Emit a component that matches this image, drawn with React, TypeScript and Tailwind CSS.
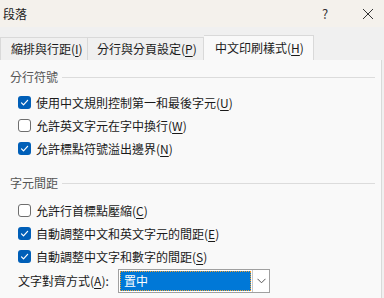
import React from 'react';

const FONT = { fontFamily: '"Noto Sans CJK TC", "Noto Sans", sans-serif' };

const Mn: React.FC<{ pre: string; key_: string }> = ({ pre, key_ }) => (
  <span>
    {pre}(<span className="underline underline-offset-2">{key_}</span>)
  </span>
);

const CheckBox: React.FC<{ checked: boolean }> = ({ checked }) =>
  checked ? (
    <span className="w-[13px] h-[13px] rounded-[3px] bg-[#005fb8] flex items-center justify-center shrink-0">
      <svg width="9" height="9" viewBox="0 0 9 9" fill="none">
        <path d="M1.5 4.8 L3.5 6.8 L7.6 2.3" stroke="white" strokeWidth="1.2" strokeLinecap="round" strokeLinejoin="round" />
      </svg>
    </span>
  ) : (
    <span className="w-[13px] h-[13px] rounded-[3px] bg-white border border-[#6e6e6e] shrink-0" />
  );

const Row: React.FC<{ checked: boolean; label: string; k: string }> = ({ checked, label, k }) => (
  <div className="h-[23px] flex items-center pl-[18px] gap-[5px] text-[12px] text-[#1a1a1a]">
    <CheckBox checked={checked} />
    <Mn pre={label} key_={k} />
  </div>
);

const Header: React.FC<{ title: string }> = ({ title }) => (
  <div className="h-[16px] flex items-center pl-[10px] pr-[6px] gap-[4px]">
    <span className="text-[12px] text-[#555555] leading-none">{title}</span>
    <div className="flex-1 h-px bg-[#dcdcdc]" />
  </div>
);

export default function App() {
  return (
    <div className="w-[384px] h-[298px] overflow-hidden bg-[#f0f0f0] flex flex-col" style={FONT}>
      <div className="h-[27px] shrink-0 bg-[#f4f1ec] flex items-center pl-[3px] text-[12px] text-[#1a1a1a]">
        <span className="flex-1">段落</span>
        <span className="w-[30px] text-[13px] text-[#333]">?</span>
        <span className="w-[32px] flex justify-center">
          <svg width="12" height="12" viewBox="0 0 12 12">
            <path d="M1 1 L11 11 M11 1 L1 11" stroke="#333" strokeWidth="1" />
          </svg>
        </span>
      </div>
      <div className="h-[8px] shrink-0" />
      <div className="h-[25px] shrink-0 flex items-end text-[12px] text-[#1a1a1a]">
        <div className="h-[23px] w-[88px] border-t border-l border-r border-[#d9d9d9] bg-[#f0f0f0] flex items-center pl-[10px]">
          <Mn pre="縮排與行距" key_="I" />
        </div>
        <div className="h-[23px] w-[116px] border-t border-r border-[#d9d9d9] bg-[#f0f0f0] flex items-center pl-[9px]">
          <Mn pre="分行與分頁設定" key_="P" />
        </div>
        <div className="h-[25px] w-[110px] border-t border-r border-[#d9d9d9] bg-[#f9f9f9] flex items-center pl-[11px]">
          <Mn pre="中文印刷樣式" key_="H" />
        </div>
      </div>
      <div className="flex-1 w-[382px] bg-[#f9f9f9] border-r border-[#d9d9d9] pt-[9px] flex flex-col">
        <Header title="分行符號" />
        <div className="mt-[6px]">
          <Row checked label="使用中文規則控制第一和最後字元" k="U" />
          <Row checked={false} label="允許英文字元在字中換行" k="W" />
          <Row checked label="允許標點符號溢出邊界" k="N" />
        </div>
        <div className="mt-[15px]">
          <Header title="字元間距" />
        </div>
        <div className="mt-[8px]">
          <Row checked={false} label="允許行首標點壓縮" k="C" />
          <Row checked label="自動調整中文和英文字元的間距" k="E" />
          <Row checked label="自動調整中文字和數字的間距" k="S" />
        </div>
        <div className="h-[24px] mt-[1px] flex items-center pl-[18px] text-[12px] text-[#1a1a1a]">
          <span className="w-[100px]">
            <Mn pre="文字對齊方式" key_="A" />:
          </span>
          <div className="w-[152px] h-[24px] bg-white border border-[#a0a0a0] flex">
            <div className="flex-1 m-[1px] bg-[#0078d7] border border-dotted border-[#f0a030] flex items-center pl-[3px] text-white">
              置中
            </div>
            <div className="w-[17px] border-l border-[#c8c8c8] flex items-center justify-center">
              <svg width="9" height="6" viewBox="0 0 9 6" fill="none">
                <path d="M0.5 0.8 L4.5 4.8 L8.5 0.8" stroke="#555" strokeWidth="1" />
              </svg>
            </div>
          </div>
        </div>
      </div>
    </div>
  );
}
